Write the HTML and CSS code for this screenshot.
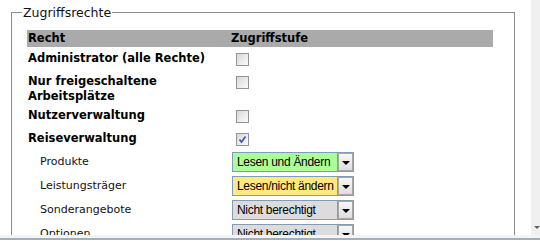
FILE: index.html
```html
<!DOCTYPE html>
<html lang="de">
<head>
  <meta charset="UTF-8">
  <title>Zugriffsrechte</title>
  <link rel="stylesheet" href="styles.css">
</head>
<body>
  <div class="window">
    <div class="viewport">
      <fieldset class="rights">
        <legend>Zugriffsrechte</legend>
        <table class="rights-table">
          <thead>
            <tr>
              <th class="col-name">Recht</th>
              <th class="col-level">Zugriffstufe</th>
            </tr>
          </thead>
          <tbody>
            <tr class="main">
              <td class="name">Administrator (alle Rechte)</td>
              <td class="level"><span class="check"></span></td>
            </tr>
            <tr class="main">
              <td class="name">Nur freigeschaltene Arbeitsplätze</td>
              <td class="level"><span class="check"></span></td>
            </tr>
            <tr class="main">
              <td class="name">Nutzerverwaltung</td>
              <td class="level"><span class="check"></span></td>
            </tr>
            <tr class="main">
              <td class="name">Reiseverwaltung</td>
              <td class="level">
                <span class="check checked">
                  <svg width="11" height="11" viewBox="0 0 11 11"><path d="M2.5 5.5 L4.5 8 L8.5 2.5" fill="none" stroke="#4657a6" stroke-width="1.7"/></svg>
                </span>
              </td>
            </tr>
            <tr class="sub">
              <td class="name">Produkte</td>
              <td class="level">
                <div class="combo"><span class="combo-value full">Lesen und Ändern</span><span class="combo-btn"></span></div>
              </td>
            </tr>
            <tr class="sub">
              <td class="name">Leistungsträger</td>
              <td class="level">
                <div class="combo"><span class="combo-value read">Lesen/nicht ändern</span><span class="combo-btn"></span></div>
              </td>
            </tr>
            <tr class="sub">
              <td class="name">Sonderangebote</td>
              <td class="level">
                <div class="combo"><span class="combo-value none">Nicht berechtigt</span><span class="combo-btn"></span></div>
              </td>
            </tr>
            <tr class="sub">
              <td class="name">Optionen</td>
              <td class="level">
                <div class="combo"><span class="combo-value none">Nicht berechtigt</span><span class="combo-btn"></span></div>
              </td>
            </tr>
          </tbody>
        </table>
      </fieldset>
    </div>
    <div class="scrollbar"><span class="scroll-arrow"></span></div>
  </div>
  <div class="statusbar"></div>
</body>
</html>
```

FILE: styles.css
```css
* {
  margin: 0;
  padding: 0;
  box-sizing: border-box;
}

body {
  font-family: "DejaVu Sans", Verdana, sans-serif;
  font-size: 11px;
  color: #000;
  background: #fff;
  width: 540px;
  height: 244px;
  overflow: hidden;
}

.window {
  display: flex;
  height: 235px;
}

.viewport {
  width: 531px;
  height: 235px;
  overflow: hidden;
}

.rights {
  width: 504px;
  margin: 5px 0 0 11px;
  border: 1px solid #8c8c8c;
  padding: 0 0 20px 15px;
}

.rights legend {
  margin-left: -5px;
  padding: 0 1px;
  font-size: 12.5px;
  line-height: 15px;
  color: #111;
}

.rights-table {
  width: 466px;
  margin-top: 10px;
  border-collapse: collapse;
}

.rights-table th {
  background: #aaaaaa;
  text-align: left;
  font-size: 11.5px;
  font-weight: bold;
  line-height: 15px;
  padding: 1px 0 1px 1px;
}

.rights-table .col-name {
  width: 202px;
}

.rights-table .col-level {
  padding-left: 2px;
}

.rights-table td {
  vertical-align: top;
}

.main .name {
  width: 202px;
  font-size: 11.5px;
  font-weight: bold;
  line-height: 15px;
  padding: 4px 0 0 1px;
}

.main .level {
  padding: 6px 0 4px 7px;
}

.sub .name {
  padding: 4px 0 0 13px;
  line-height: 15px;
  color: #111;
}

.sub .level {
  padding: 2px 0 2px 3px;
}

.check {
  display: block;
  width: 13px;
  height: 13px;
  border: 1px solid #949494;
  background: linear-gradient(135deg, #d6d6d6 0%, #eeeeee 60%, #fafafa 100%);
}

.check svg {
  display: block;
}

.combo {
  display: flex;
  width: 122px;
  height: 20px;
  border: 1px solid #7f9db9;
  background: #fff;
}

.combo-value {
  width: 105px;
  height: 18px;
  padding-left: 4px;
  font-family: "Liberation Sans", Arial, sans-serif;
  font-size: 12px;
  letter-spacing: -0.3px;
  line-height: 18px;
  white-space: nowrap;
  overflow: hidden;
  border-right: 1px solid #7f9db9;
}

.combo-value.full {
  background: #aaff99;
}

.combo-value.read {
  background: #ffe980;
}

.combo-value.none {
  background: #dcdcdc;
}

.combo-btn {
  position: relative;
  width: 15px;
  height: 18px;
  border: 1px solid #a7a7a7;
  background: linear-gradient(#f7f7f7, #dedede);
}

.combo-btn::after {
  content: "";
  position: absolute;
  left: 3px;
  top: 7px;
  border-left: 4px solid transparent;
  border-right: 4px solid transparent;
  border-top: 4px solid #000;
}

.scrollbar {
  position: relative;
  width: 9px;
  height: 235px;
  background: #f0f0f0;
}

.scroll-arrow {
  position: absolute;
  left: 3px;
  top: 226px;
  border-left: 3px solid transparent;
  border-right: 3px solid transparent;
  border-top: 3px solid #606060;
}

.statusbar {
  height: 8px;
  background: #f4f4f4;
  border-bottom: 3px solid #fff;
  box-shadow: inset 0 -2px 0 #9fb0bd;
}
```
